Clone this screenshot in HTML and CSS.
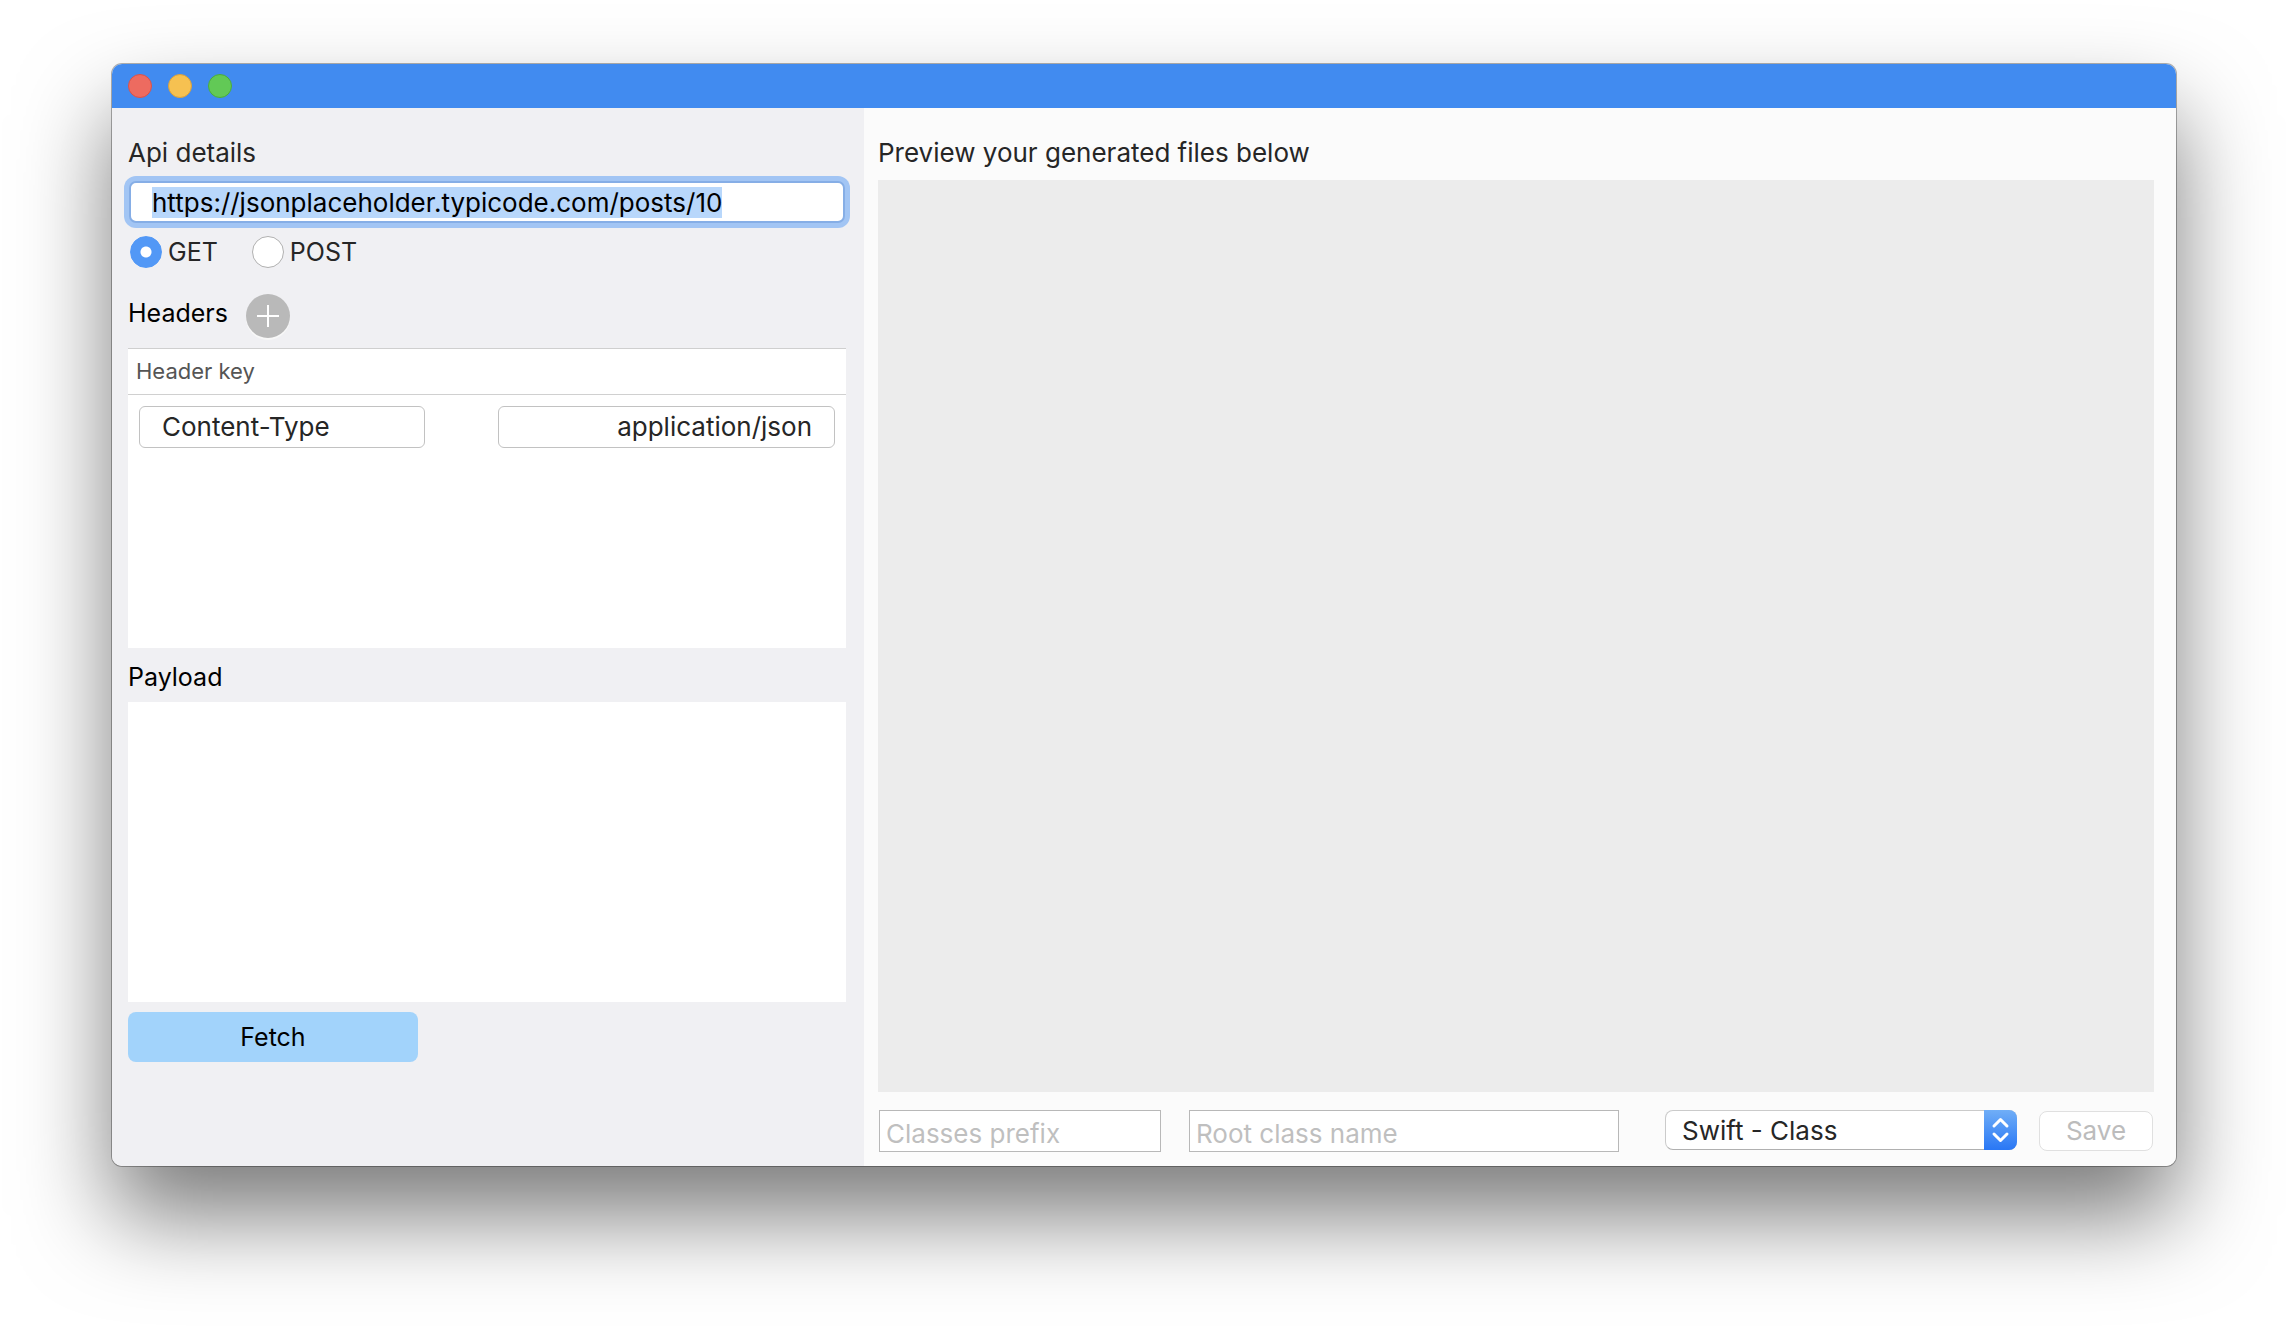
FILE: index.html
```
<!DOCTYPE html>
<html lang="en">
<head>
<meta charset="utf-8">
<title>Model Generator</title>
<link rel="stylesheet" href="styles.css">
</head>
<body>
<div class="window">
  <header class="titlebar">
    <button class="light light-close" type="button" aria-label="Close"></button>
    <button class="light light-minimize" type="button" aria-label="Minimize"></button>
    <button class="light light-zoom" type="button" aria-label="Zoom"></button>
  </header>
  <div class="panes">
    <section class="request">
      <label class="label" for="url">Api details</label>
      <input class="url" id="url" type="text" value="https://jsonplaceholder.typicode.com/posts/10" spellcheck="false" autofocus>
      <div class="methods">
        <label class="method"><input class="radio" type="radio" name="method" checked>GET</label>
        <label class="method"><input class="radio" type="radio" name="method">POST</label>
      </div>
      <div class="headers-title">
        <h2 class="label label-strong">Headers</h2>
        <button class="add" type="button" aria-label="Add header">
          <svg viewBox="0 0 44 44" aria-hidden="true"><path d="M22 11v22M11 22h22" stroke="#fff" stroke-width="2"/></svg>
        </button>
      </div>
      <div class="table-box">
        <table class="headers">
          <thead><tr><th colspan="2">Header key</th></tr></thead>
          <tbody><tr>
            <td><input class="cell cell-key" type="text" value="Content-Type" aria-label="Header key"></td>
            <td><input class="cell cell-value" type="text" value="application/json" aria-label="Header value"></td>
          </tr></tbody>
        </table>
      </div>
      <label class="label label-strong payload-label" for="payload">Payload</label>
      <textarea class="payload" id="payload"></textarea>
      <button class="fetch" type="button">Fetch</button>
    </section>
    <main class="preview">
      <h2 class="label">Preview your generated files below</h2>
      <div class="files"></div>
      <footer class="options">
        <input class="field" type="text" placeholder="Classes prefix" aria-label="Classes prefix">
        <input class="field root" type="text" placeholder="Root class name" aria-label="Root class name">
        <div class="language">
          <select class="select" aria-label="Language"><option>Swift - Class</option></select>
          <svg class="stepper" viewBox="0 0 33 40" aria-hidden="true"><path d="M10 16l6.500-6.500 6.500 6.500M10 24l6.500 6.500 6.500-6.500" fill="none" stroke="#fff" stroke-width="3" stroke-linecap="round" stroke-linejoin="round"/></svg>
        </div>
        <button class="save" type="button" disabled>Save</button>
      </footer>
    </main>
  </div>
</div>
<script src="app.js"></script>
</body>
</html>
```
FILE: app.js
```
const url = document.getElementById("url");
url.focus();
url.select();
```
FILE: styles.css
```
* { box-sizing: border-box; }

body {
  margin: 0;
  min-height: 100vh;
  padding: 64px 112px 160px;
  display: flex;
  background: #fff;
  color: #262626;
  font: 25px/32px Inter, "Liberation Sans", sans-serif;
}

button, input, select, textarea { font: inherit; color: inherit; margin: 0; }
input, textarea, select, button { outline: none; }
input, select, .save { font-size: 26px; }

.window {
  flex: 1;
  min-width: 0;
  display: flex;
  flex-direction: column;
  border-radius: 10px;
  overflow: hidden;
  box-shadow: 0 0 0 1px rgba(0, 0, 0, .3), 0 50px 92px rgba(0, 0, 0, .52);
}

.titlebar {
  height: 44px;
  padding: 0 16px;
  display: flex;
  align-items: center;
  gap: 16px;
  background: #418bf0;
}
.light { width: 24px; height: 24px; padding: 0; border: 1px solid; border-radius: 50%; }
.light-close { background: #ed6b60; border-color: #d8524a; }
.light-minimize { background: #f6c151; border-color: #d9a03c; }
.light-zoom { background: #62c956; border-color: #4bab3d; }

.panes { flex: 1; display: grid; grid-template-columns: 752fr 1312fr; }

.request {
  display: flex;
  flex-direction: column;
  min-width: 0;
  padding: 29px 18px 104px 16px;
  background: #f0f0f3;
}
.label { margin: 0; font-size: 26px; font-weight: 400; }
.label-strong { color: #000; font-size: 25px; }

.url {
  height: 42px;
  margin: 12px 1px 13px;
  padding: 1px 21px 0;
  border: 2px solid #86aee6;
  border-radius: 7px;
  background: #fff;
  color: #000;
  box-shadow: 0 0 0 5px #a2c5f4;
}
.url::selection { background: #b8d7fb; color: #000; }

.methods { display: flex; gap: 34px; padding-left: 2px; }
.method { display: flex; align-items: center; gap: 6px; }
.radio {
  appearance: none;
  width: 32px;
  height: 32px;
  border: 1px solid #b0b0b0;
  border-radius: 50%;
  background: #fff;
}
.radio:checked {
  border-color: #5298f6;
  background: radial-gradient(circle, #fff 5px, #5298f6 6px);
}

.headers-title { display: flex; gap: 18px; margin: 26px 0 10px; }
.headers-title .label { padding-top: 3px; }
.add { width: 44px; height: 44px; padding: 0; border: 0; border-radius: 50%; background: #b9b9b9; box-shadow: 0 2px 0 #f8f8f8; }
.add svg { display: block; }

.table-box { flex: 1 0 200px; border-top: 1px solid #cfcfcf; background: #fff; }
.headers { width: 100%; table-layout: fixed; border-collapse: collapse; }
.headers th {
  height: 45px;
  padding: 0 8px;
  border-bottom: 1px solid #d0d0d0;
  color: #555;
  font-size: 22px;
  font-weight: 400;
  text-align: left;
}
.headers td { padding: 11px; }
.cell {
  display: block;
  width: 100%;
  height: 42px;
  padding: 0 22px;
  border: 1px solid #c2c2c2;
  border-radius: 6px;
  background: #fff;
}
.cell-key { width: 85%; }
.cell-value { text-align: right; }

.payload-label { margin: 13px 0 9px; }
.payload { flex: 1 0 200px; padding: 8px; border: 0; resize: none; background: #fff; }
.fetch { width: 290px; height: 50px; margin-top: 10px; border: 0; border-radius: 8px; background: #a2d3fb; color: #000; }

.preview { display: flex; flex-direction: column; min-width: 0; padding: 29px 22px 14px 14px; background: #fbfbfb; }
.files { flex: 1; margin-top: 11px; background: #ececec; }
.options {
  display: grid;
  grid-template-columns: 310fr 476fr 374fr 114px;
  margin: 18px 1px 0;
}
.field {
  min-width: 0;
  height: 42px;
  margin-right: 28px;
  padding: 5px 6px 0;
  border: 1px solid #b8b8b8;
  background: #fff;
}
.field::placeholder { color: #bfbfbf; opacity: 1; }
.root { margin-right: 46px; }
.language { position: relative; height: 40px; margin-right: 22px; }
.select {
  appearance: none;
  width: 100%;
  height: 40px;
  padding: 1px 40px 0 16px;
  border: 1px solid #cbcbcb;
  border-bottom-color: #b0b0b0;
  border-radius: 8px;
  background: #fff;
}
.stepper {
  position: absolute;
  top: 0;
  right: 0;
  width: 33px;
  height: 40px;
  border-radius: 0 8px 8px 0;
  background: linear-gradient(#70aef7, #2977f5);
  pointer-events: none;
}
.save {
  height: 40px;
  margin-top: 1px;
  padding: 0;
  border: 1px solid #e0e0e0;
  border-radius: 8px;
  background: #fff;
  color: #bcbcbc;
}
```
